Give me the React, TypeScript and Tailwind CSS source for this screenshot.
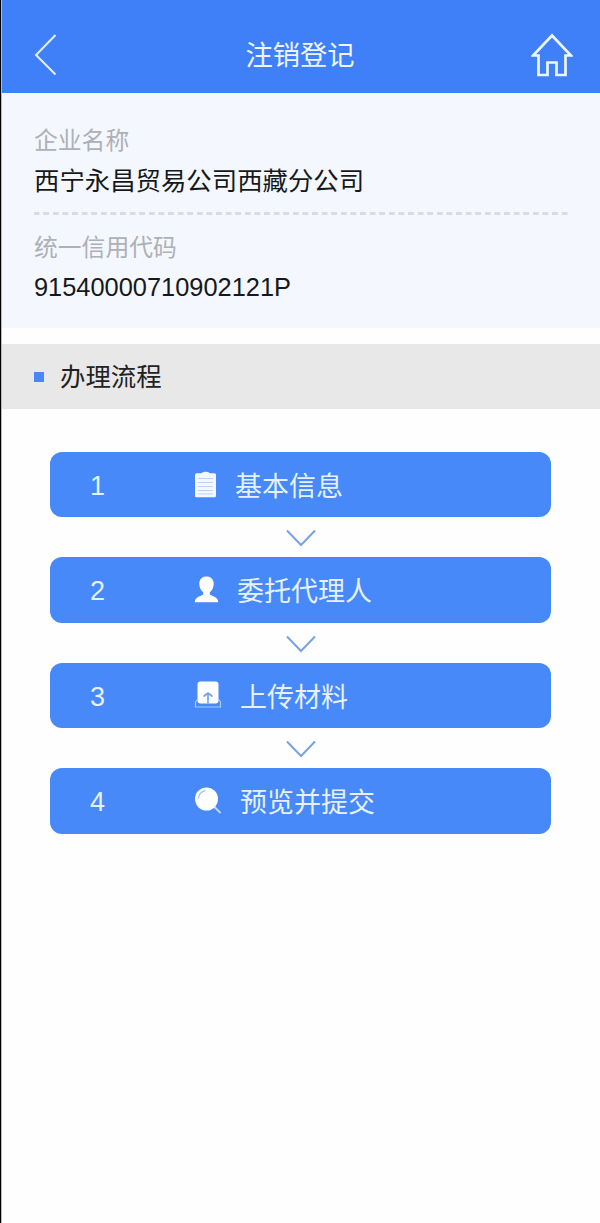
import type { ReactNode } from "react"

const steps: { label: string; icon: ReactNode; gap: string }[] = [
  { label: "基本信息", icon: <ClipboardIcon />, gap: "ml-[13px]" },
  { label: "委托代理人", icon: <PersonIcon />, gap: "ml-[15px]" },
  { label: "上传材料", icon: <UploadIcon />, gap: "ml-[18px]" },
  { label: "预览并提交", icon: <SearchIcon />, gap: "ml-[18px]" },
]

function ClipboardIcon() {
  return (
    <svg width="28" height="28" viewBox="0 0 28 28">
      <path d="M2.5 2.200h4.500q5-2.700 9 0h4.500a1.500 1.500 0 0 1 1.500 1.500v21a1.500 1.500 0 0 1-1.500 1.500h-18a1.500 1.500 0 0 1-1.500-1.500v-21a1.500 1.500 0 0 1 1.500-1.500z" fill="#f4f9ff" />
      <path d="M4 7.500h15M4 11.500h15M4 15.500h15M4 19.500h15M4 23h15" stroke="#b9d2fb" strokeWidth="1" />
    </svg>
  )
}

function PersonIcon() {
  return (
    <svg width="28" height="28" viewBox="0 0 28 28">
      <path
        d="M12.500 .5C8.300 .5 5.300 3.200 5.300 7.600c0 3.500 1.200 6.700 3.900 8.600v2.300c-1.500 1.700-8.400 1.800-8.400 7.800h23.400c0-6-6.900-6.100-8.400-7.800v-2.300c2.700-1.900 3.900-5.100 3.900-8.600C19.700 3.200 16.700 .5 12.500 .5z"
        fill="#fff"
      />
    </svg>
  )
}

function UploadIcon() {
  return (
    <svg width="28" height="28" viewBox="0 0 28 28" fill="none">
      <path d="M3.500 18.500L1.500 21v5h25v-5l-2-2.500" stroke="#a9cafd" strokeWidth="1.200" />
      <rect x="3.500" y=".5" width="21" height="22" rx="3" fill="#fff" />
      <path d="M14 22.500v-10M9.500 15.500L14 12l4.500 3.500" stroke="#6b9ff4" strokeWidth="1.600" />
    </svg>
  )
}

function SearchIcon() {
  return (
    <svg width="28" height="28" viewBox="0 0 28 28" fill="none">
      <path d="M20 19.500l6.500 6.500" stroke="#c3dafd" strokeWidth="1.800" />
      <circle cx="12.500" cy="12" r="11.500" fill="#fff" />
      <path d="M4.500 11.500c.3-4 3-7 7-7.800" stroke="#9fc1f8" strokeWidth="1.200" />
    </svg>
  )
}

function Arrow() {
  return (
    <div className="flex h-[40px] items-center justify-center">
      <svg width="30" height="18" viewBox="0 0 30 18" fill="none" className="mt-[2px]">
        <path d="M1 1.500L15 16L29 1.500" stroke="#78a3e2" strokeWidth="2" />
      </svg>
    </div>
  )
}

export default function App() {
  return (
    <div className="h-[1223px] w-[600px] border-l border-black bg-[#fefefe] font-['Liberation_Sans','Noto_Sans_CJK_SC',sans-serif]">
      <div className="h-full border-l border-[#8a8a8a]/60">
        <header className="flex h-[93px] items-start justify-between bg-[#3f80f9] pr-[27px] pl-[32px] text-white">
          <svg width="24" height="42" viewBox="0 0 24 42" fill="none" className="mt-[34px]">
            <path d="M21.500 1L2 21L21.500 40.500" stroke="#e3f0ff" strokeWidth="2" />
          </svg>
          <h1 className="mt-[37px] ml-[11px] text-[27.300px] leading-[38px] text-[#eef5ff]">注销登记</h1>
          <svg width="42" height="44" viewBox="0 0 42 44" fill="none" className="mt-[33px]">
            <path
              d="M21 2.500L2 22.500H7.500V42H16.500V29.500H25.500V42H34.500V22.500H40Z"
              stroke="#eef6ff"
              strokeWidth="2.700"
            />
          </svg>
        </header>

        <section className="h-[235px] bg-[#f4f8fe] px-[32px] pt-[30px]">
          <p className="text-[23.800px] leading-[36px] text-[#adb0b6]">企业名称</p>
          <p className="text-[25.400px] leading-[44px] text-[#17181a]">西宁永昌贸易公司西藏分公司</p>
          <div className="mt-[9px] h-[3px] bg-[repeating-linear-gradient(90deg,#d9dbe3_0_5px,transparent_6px_9px,#d9dbe3_9.600px)]" />
          <p className="mt-[15px] text-[23.800px] leading-[36px] text-[#adb0b6]">统一信用代码</p>
          <p className="text-[25.400px] leading-[42px] text-[#17181a]">91540000710902121P</p>
        </section>

        <div className="mt-[16px] flex h-[65px] items-center bg-[#e8e8e8] pl-[32px]">
          <span className="h-[10px] w-[10px] bg-[#4a87f0]" />
          <h2 className="mt-[2px] ml-[16px] text-[25.400px] text-[#222]">办理流程</h2>
        </div>

        <main className="mt-[43px] pr-[49px] pl-[48px]">
          {steps.map((step, i) => (
            <div key={step.label}>
              {i > 0 && <Arrow />}
              <div className="flex h-[65.400px] items-center rounded-[12px] bg-[#4789f8] pl-[40px] text-[#e6f1ff]">
                <span className="w-[104px] pt-[3px] text-[27px]">{i + 1}</span>
                {step.icon}
                <span className={`pt-[5px] text-[27px] ${step.gap}`}>{step.label}</span>
              </div>
            </div>
          ))}
        </main>
      </div>
    </div>
  )
}
